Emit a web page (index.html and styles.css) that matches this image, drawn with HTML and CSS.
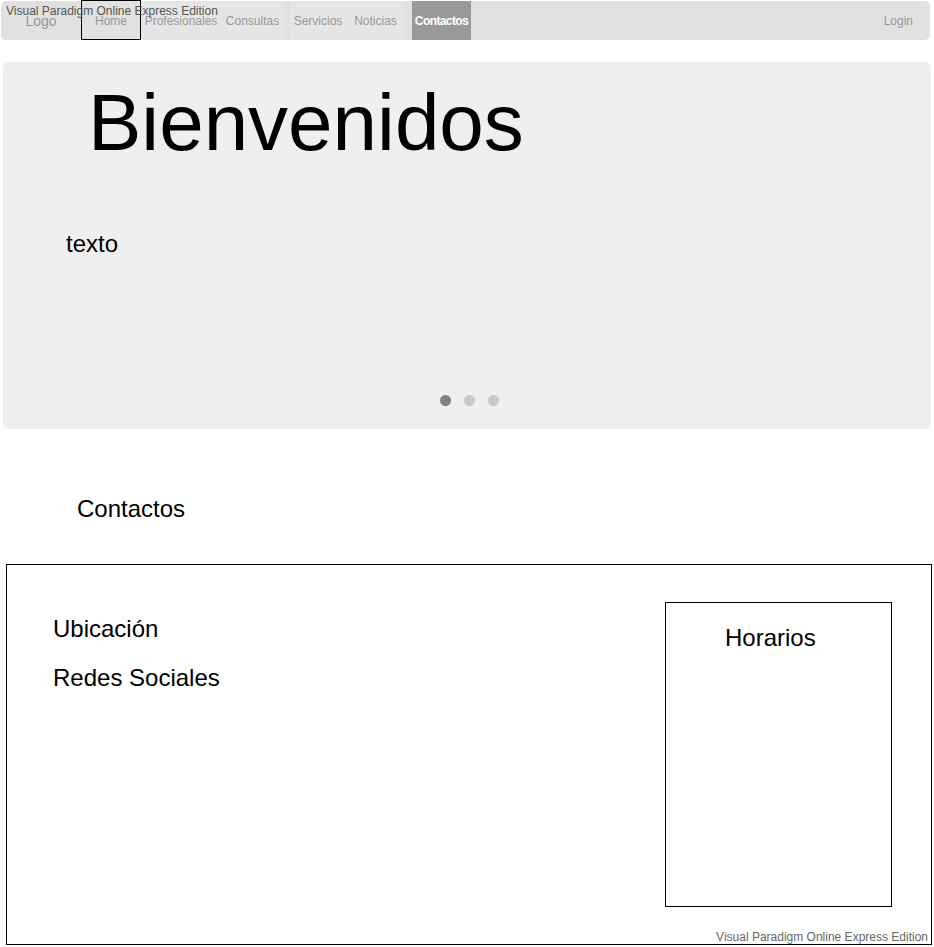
FILE: index.html
```html
<!DOCTYPE html>
<html lang="es">
<head>
<meta charset="utf-8">
<title>Contactos</title>
<link rel="stylesheet" href="styles.css">
</head>
<body>
<div class="page">
  <div class="vp-mark-top">Visual Paradigm Online Express Edition</div>
  <nav class="nav">
    <div class="nav-logo">Logo</div>
    <div class="nav-item nav-home">Home</div>
    <div class="nav-item nav-prof">Profesionales</div>
    <div class="nav-item nav-cons">Consultas</div>
    <div class="nav-gap"></div>
    <div class="nav-item nav-serv">Servicios</div>
    <div class="nav-item nav-noti">Noticias</div>
    <div class="nav-gap nav-gap-wide"></div>
    <div class="nav-item nav-active">Contactos</div>
    <div class="nav-spacer"></div>
    <div class="nav-login">Login</div>
  </nav>

  <section class="hero">
    <h1 class="hero-title">Bienvenidos</h1>
    <p class="hero-text">texto</p>
    <div class="hero-dots">
      <span class="dot dot-active"></span>
      <span class="dot"></span>
      <span class="dot"></span>
    </div>
  </section>

  <h2 class="section-title">Contactos</h2>

  <section class="contact-box">
    <div class="contact-row">
      <div class="contact-links">
        <div class="contact-link">Ubicación</div>
        <div class="contact-link">Redes Sociales</div>
      </div>
      <div class="hours-box">
        <div class="hours-title">Horarios</div>
      </div>
    </div>
    <div class="vp-mark-bottom">Visual Paradigm Online Express Edition</div>
  </section>
</div>
</body>
</html>
```

FILE: styles.css
```css
* {
  box-sizing: border-box;
}

html, body {
  margin: 0;
  padding: 0;
  background: #ffffff;
}

body {
  font-family: "Liberation Sans", Arial, sans-serif;
  color: #000;
}

.page {
  position: relative;
  width: 934px;
  padding-top: 1px;
}

.vp-mark-top {
  position: absolute;
  top: 4px;
  left: 6px;
  font-size: 12px;
  line-height: 14px;
  color: #555;
  white-space: nowrap;
  z-index: 2;
}

/* ---------- nav ---------- */
.nav {
  display: flex;
  align-items: stretch;
  margin-left: 1px;
  width: 929px;
  height: 39px;
  background: #e1e1e1;
  border-radius: 5px;
  font-size: 12px;
  color: #999;
}

.nav-logo {
  width: 80px;
  display: flex;
  align-items: center;
  justify-content: center;
  font-size: 14px;
  padding-top: 1px;
}

.nav-item {
  display: flex;
  align-items: center;
  justify-content: center;
  background: #e5e5e5;
  white-space: nowrap;
}

.nav-home {
  width: 60px;
  margin-top: -1px;
  height: 40px;
  border: 1px solid #000;
  background: #e1e1e1;
  padding-top: 1px;
}

.nav-prof { width: 80px; }
.nav-cons { width: 63px; }
.nav-serv { width: 56px; }
.nav-noti { width: 59px; }

.nav-gap { width: 6px; }
.nav-gap-wide { width: 7px; }

.nav-active {
  width: 59px;
  background: #999;
  color: #fff;
  font-weight: bold;
  letter-spacing: -0.6px;
}

.nav-spacer { flex: 1; }

.nav-login {
  display: flex;
  align-items: center;
  padding-right: 17px;
}

/* ---------- hero ---------- */
.hero {
  margin: 22px 0 0 3px;
  width: 928px;
  height: 367px;
  background: #efefef;
  border-radius: 5px;
  display: flex;
  flex-direction: column;
  padding: 21px 0 23px 0;
}

.hero-title {
  margin: 0 0 0 85px;
  font-size: 80px;
  line-height: 80px;
  font-weight: normal;
}

.hero-text {
  margin: 67px 0 0 63px;
  font-size: 24px;
  line-height: 28px;
}

.hero-dots {
  margin-top: auto;
  display: flex;
  justify-content: center;
  gap: 13px;
  padding-left: 4px;
}

.dot {
  width: 11px;
  height: 11px;
  border-radius: 50%;
  background: #c8c8c8;
}

.dot-active {
  background: #808080;
}

/* ---------- contact section ---------- */
.section-title {
  margin: 66px 0 0 77px;
  font-size: 24px;
  line-height: 28px;
  font-weight: normal;
}

.contact-box {
  margin: 41px 0 0 6px;
  width: 926px;
  border: 1px solid #000;
  display: flex;
  flex-direction: column;
}

.contact-row {
  display: flex;
  padding: 37px 39px 0 46px;
}

.contact-links {
  flex: 1;
  display: flex;
  flex-direction: column;
  gap: 21px;
  padding-top: 13px;
}

.contact-link {
  font-size: 24px;
  line-height: 28px;
}

.hours-box {
  width: 227px;
  height: 305px;
  border: 1px solid #000;
  padding: 21px 0 0 59px;
}

.hours-title {
  font-size: 24px;
  line-height: 28px;
}

.vp-mark-bottom {
  margin-top: 23px;
  padding-right: 3px;
  text-align: right;
  font-size: 12px;
  line-height: 14px;
  color: #666;
}
```
